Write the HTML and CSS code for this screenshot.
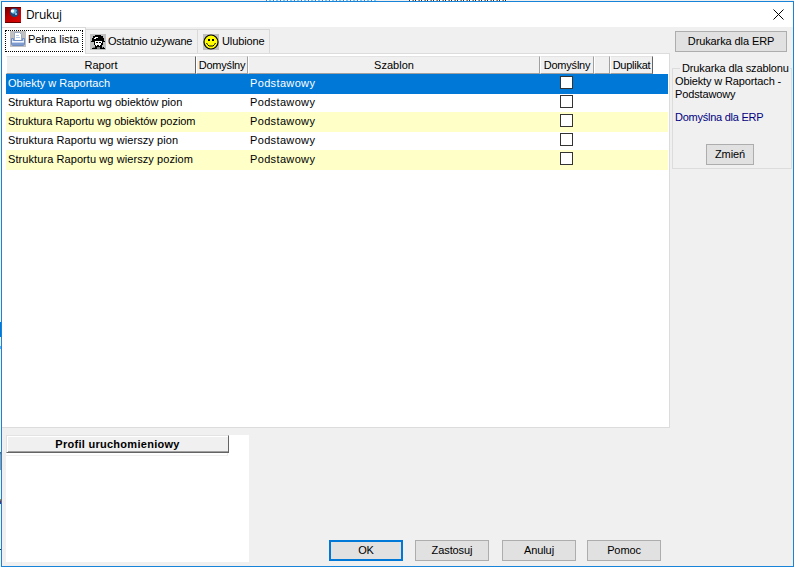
FILE: index.html
```html
<!DOCTYPE html>
<html lang="pl">
<head>
<meta charset="utf-8">
<title>Drukuj</title>
<link rel="stylesheet" href="styles.css">
</head>
<body>
<div class="window">
  <header class="titlebar">
    <svg class="app-icon" width="16" height="16" viewBox="0 0 16 16">
      <defs><linearGradient id="red" x1="0" y1="0" x2="1" y2="1"><stop offset="0" stop-color="#6a0000"/><stop offset=".4" stop-color="#b80000"/><stop offset="1" stop-color="#e00808"/></linearGradient></defs>
      <path fill="url(#red)" d="M0 0h16v16H0z"/>
      <path fill="#600" d="M0 0h16v1H0zM0 15h16v1H0z"/>
      <circle cx="9.500" cy="5.500" r="4.500" fill="#1d4c80"/>
      <path fill="#68b0d8" d="M6 3l3-1 3 1-1 3-3 1-2-2z"/>
      <circle cx="7.500" cy="4" r="1.800" fill="#eefaff"/>
      <path fill="#90b8dc" d="M10 6h2v2h-2z"/>
    </svg>
    <span class="title">Drukuj</span>
    <svg class="close" width="11" height="11" viewBox="0 0 11 11"><path d="M.5.5l10 10M10.5.5l-10 10" stroke="#000" fill="none"/></svg>
  </header>
  <div class="upper">
    <section class="main">
      <nav class="tabs">
        <div class="tab active"><div class="focus">
          <svg width="16" height="16" viewBox="0 0 16 16"><path fill="#c0c0c0" d="M0 0h16v16H0z"/><path fill="#fff" stroke="#9aa9c4" d="M4.500 1.500h5l2 2v6h-7z"/><path stroke="#b8cce8" d="M6 4.500h3M6 6.500h4"/><path fill="#c3d3ee" stroke="#6f8cc0" d="M1.500 7.500h2v2h9v-2h2v6l-1 1h-11l-1-1z"/><path stroke="#f4f8ff" d="M2 10.500h12"/><path stroke="#7f9bd0" stroke-width="2" d="M2 13h12"/></svg>
          <span class="t1">Pełna lista</span></div></div>
        <div class="tab tab-recent">
          <svg width="16" height="16" viewBox="0 0 16 16" shape-rendering="crispEdges"><path fill="#c0c0c0" d="M0 0h16v16H0z"/><path d="M5 1h6v1h2v2h1v3h1v1h-2v3h-1v2h2v1h1v1H2v-1h2v-1h1v-2H4V8H1V7h1V4h1V2h2z"/><path fill="#fff" d="M5 3h3v1H5zM4 4h2v1H4zM5 7h7v2H5zM5 9h6v2H5zM6 11h4v1H6z"/><path fill="#808080" d="M3 13h2v1H3zM7 13h3v2H7zM12 13h1v1h-1z"/><path d="M6 8h2v1H6zM9 8h2v1H9zM7 11h2v1H7z"/></svg>
          <span class="t2">Ostatnio używane</span></div>
        <div class="tab tab-fav">
          <svg width="16" height="16" viewBox="0 0 16 16"><path fill="#c0c0c0" d="M0 0h16v16H0z"/><circle cx="8" cy="8" r="7" fill="#ff0" stroke="#000" stroke-width="1.200"/><path d="M5 5h2v2H5zM9 5h2v2H9z"/><path d="M3.500 9l1 1.500 1.500 1.500h4l1.500-1.500 1-1.500" fill="none" stroke="#000"/></svg>
          <span class="t3">Ulubione</span></div>
      </nav>
      <div class="panel">
        <div class="grid head">
          <div><span class="h1">Raport</span></div><div><span class="h2">Domyślny</span></div><div><span class="h3">Szablon</span></div><div><span class="h2">Domyślny</span></div><div></div><div><span class="h4">Duplikat</span></div>
        </div>
        <div class="grid row selected"><span>Obiekty w Raportach</span><i></i><span class="pod">Podstawowy</span><b class="check"></b></div>
        <div class="grid row"><span>Struktura Raportu wg obiektów pion</span><i></i><span class="pod">Podstawowy</span><b class="check"></b></div>
        <div class="grid row alt"><span class="tight">Struktura Raportu wg obiektów poziom</span><i></i><span class="pod">Podstawowy</span><b class="check"></b></div>
        <div class="grid row"><span class="loose">Struktura Raportu wg wierszy pion</span><i></i><span class="pod">Podstawowy</span><b class="check"></b></div>
        <div class="grid row alt"><span class="loose">Struktura Raportu wg wierszy poziom</span><i></i><span class="pod">Podstawowy</span><b class="check"></b></div>
      </div>
    </section>
    <aside class="side">
      <button class="btn wide"><span>Drukarka dla ERP</span></button>
      <div class="group">
        <div class="legend"><span>Drukarka dla szablonu</span></div>
        <p class="target"><span class="g1">Obiekty w Raportach -</span><br><span class="g2">Podstawowy</span></p>
        <p class="default"><span>Domyślna dla ERP</span></p>
        <button class="btn change"><span>Zmień</span></button>
      </div>
    </aside>
  </div>
  <div class="lower">
    <section class="profile"><div class="profile-head"><span>Profil uruchomieniowy</span></div><div class="profile-line"></div></section>
    <footer class="actions">
      <button class="btn primary"><span>OK</span></button>
      <button class="btn"><span>Zastosuj</span></button>
      <button class="btn b3"><span>Anuluj</span></button>
      <button class="btn"><span>Pomoc</span></button>
    </footer>
  </div>
</div>
</body>
</html>
```
FILE: styles.css
```css
* { box-sizing: border-box; }
html, body { margin: 0; height: 100%; overflow: hidden; }
body {
  padding: 1px 0 0 1px;
  font: 11px/13px "Liberation Sans", Arial, sans-serif;
  color: #000;
  background:
    repeating-linear-gradient(90deg, #3e82dc 0 1px, #fff 1px 3px, #76c8f4 3px 5px, #eee 5px 7px) 266px 0 / 112px 1px no-repeat,
    repeating-linear-gradient(90deg, #333 0 1px, #fff 1px 3px, #d0a050 3px 4px, #6070a0 4px 5px, #fff 5px 6px) 409px 0 / 98px 1px no-repeat,
    linear-gradient(#0078d7, #0078d7) 0 322px / 1px 15px no-repeat,
    linear-gradient(#60aef0, #60aef0) 0 346px / 1px 3px no-repeat,
    linear-gradient(#555, #999 3px) 0 452px / 1px 18px no-repeat,
    linear-gradient(#e0a020, #a02020, #2040a0) 0 499px / 1px 5px no-repeat,
    linear-gradient(#333, #333) 0 549px / 1px 1px no-repeat,
    #f0f0f0;
}
svg { display: block; flex: none; }
span { white-space: nowrap; }
.window { width: 793px; height: 566px; border: 1px solid #1883d7; background: #f0f0f0; display: flex; flex-direction: column; }
.titlebar { height: 25px; flex: none; background: #fff; display: flex; align-items: center; padding: 0 9px 0 3px; }
.title { font: 12px/16px "Open Sans", "Noto Sans", sans-serif; letter-spacing: -.35px; margin: 0 0 0 5px; flex: 1; }
.upper { display: flex; height: 401px; flex: none; }
.main { width: 668px; flex: none; display: flex; flex-direction: column; }
.tabs { display: flex; align-items: flex-end; height: 26px; flex: none; }
.tab { height: 24px; display: flex; align-items: center; border: 1px solid #d9d9d9; border-width: 1px 1px 0 0; }
.tab svg + .t2 { margin-left: 2px; letter-spacing: -.2px; }
.tab.active { width: 84px; height: 27px; margin-bottom: -1px; background: #fff; padding: 2px 1px 2px 3px; align-items: flex-start; position: relative; }
.focus { width: 78px; height: 22px; flex: none; border: 1px dotted #000; display: flex; padding: 0 0 0 4px; }
.focus span { margin-top: 2px; }
.tab .t1 { margin-left: 2px; }
.tab-recent { width: 112px; padding-left: 4px; }
.tab-fav { width: 72px; padding-left: 5px; }
.tab svg + .t3 { margin-left: 3px; letter-spacing: -.1px; }
.panel { flex: 1; background: #fff; border: 1px solid #dcdcdc; border-left: 0; padding: 2px 1px 0 4px; }
.grid { display: grid; grid-template-columns: 190px 52px 292px 54px 16px 43px; }
.head { height: 17px; width: 647px; margin-bottom: 1px; border-bottom: 1px solid #646464; }
.head div { background: #f0f0f0; border: 1px solid #a0a0a0; border-top-color: #e3e3e3; border-left-color: #fff; text-align: center; line-height: 15px; padding-top: 1px; }
.head div:first-child, .head div:last-child { border-right-color: #646464; }
.head .h2 { letter-spacing: -.2px; }
.head .h4 { letter-spacing: -.25px; }
.row { height: 20px; margin-bottom: -1px; line-height: 19px; }
.row > span { padding-left: 2px; letter-spacing: 0; }
.row .tight { letter-spacing: -.04px; }
.row .loose { letter-spacing: .08px; }
.row .pod { letter-spacing: .35px; }
.selected { background: #0078d7; color: #fff; }
.alt { background: #ffffc8; }
.check { width: 13px; height: 13px; border: 1px solid #333; background: #fff; margin: 2px 0 0 20px; }
.side { flex: 1; padding: 4px 1px 0 2px; }
.btn { display: block; width: 74px; height: 21px; padding: 0; border: 1px solid #adadad; border-radius: 0; background: #e1e1e1; font: inherit; color: #000; letter-spacing: -.1px; }
.wide { width: 112px; margin-left: 3px; }
.group { margin-top: 16px; width: 120px; height: 101px; border: 1px solid #dcdcdc; padding-left: 2px; display: flex; flex-direction: column; letter-spacing: -.13px; }
.legend { margin: -7px 0 0 5px; padding-left: 2px; background: #f0f0f0; height: 13px; width: 110px; }
.group p { margin: 0; }
.group .default { margin-top: 10px; color: #000080; letter-spacing: -.25px; }
.change { width: 48px; margin: 20px 0 0 31px; }
.lower { flex: 1; display: flex; padding: 7px 0 4px 4px; }
.profile { width: 243px; background: #fff; }
.profile-head { width: 223px; height: 18px; border: 1px solid #646464; border-top-color: #e3e3e3; border-left-color: #e3e3e3; box-shadow: inset 1px 1px #fff, inset 0 -1px #a0a0a0; background: #f0f0f0; text-align: center; font-weight: bold; line-height: 17px; letter-spacing: .28px; }
.profile-line { width: 222px; height: 3px; border: 1px solid #f0f0f0; border-width: 0 1px 1px 0; }
.actions { display: flex; align-items: flex-end; padding: 0 0 1px 80px; gap: 12px; }
.actions .b3 { margin: 0 -1px 0 1px; }
.primary { border: 2px solid #0078d7; }
```
